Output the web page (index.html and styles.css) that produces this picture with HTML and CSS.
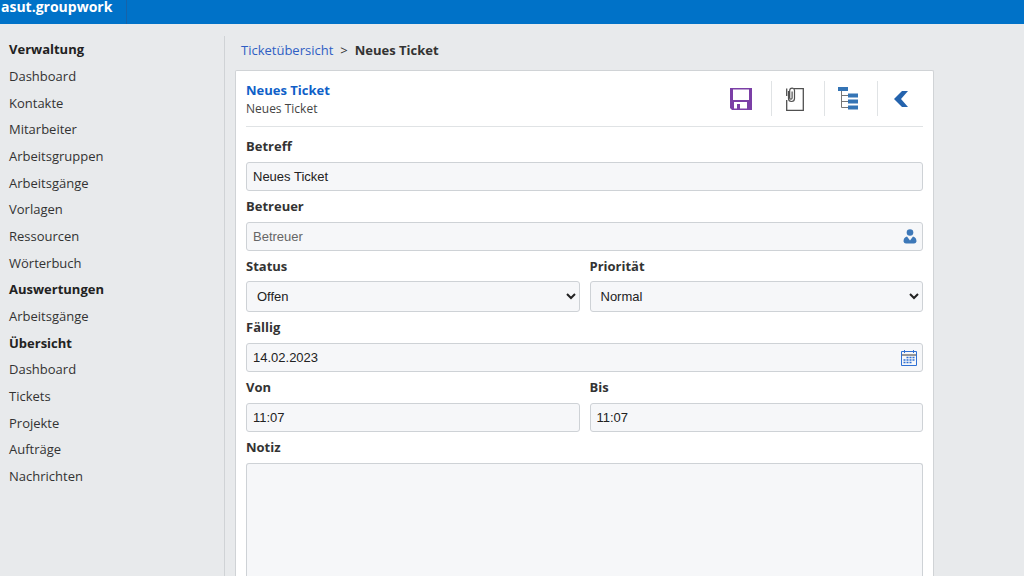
FILE: index.html
```html
<!DOCTYPE html>
<html lang="de">
<head>
<meta charset="utf-8">
<meta name="viewport" content="width=device-width, initial-scale=1">
<title>asut.groupwork – Neues Ticket</title>
<link rel="stylesheet" href="styles.css">
</head>
<body>
<header class="topbar"><a class="brand" href="#">asut.groupwork</a></header>
<div class="layout">
  <nav class="sidebar" aria-label="Hauptnavigation">
    <h2>Verwaltung</h2>
    <a href="#">Dashboard</a>
    <a href="#">Kontakte</a>
    <a href="#">Mitarbeiter</a>
    <a href="#">Arbeitsgruppen</a>
    <a href="#">Arbeitsgänge</a>
    <a href="#">Vorlagen</a>
    <a href="#">Ressourcen</a>
    <a href="#">Wörterbuch</a>
    <h2>Auswertungen</h2>
    <a href="#">Arbeitsgänge</a>
    <h2>Übersicht</h2>
    <a href="#">Dashboard</a>
    <a href="#">Tickets</a>
    <a href="#">Projekte</a>
    <a href="#">Aufträge</a>
    <a href="#">Nachrichten</a>
  </nav>
  <main class="content">
    <nav class="breadcrumb" aria-label="Pfad">
      <a href="#">Ticketübersicht</a><span>&gt;</span><strong>Neues Ticket</strong>
    </nav>
    <form class="card">
      <div class="card-head">
        <div class="titles">
          <h1>Neues Ticket</h1>
          <p>Neues Ticket</p>
        </div>
        <div class="tools">
          <button type="button" aria-label="Speichern">
            <svg width="22" height="22" viewBox="0 0 22 22"><path fill="#7b3fa6" fill-rule="evenodd" d="M0 0H22V22H2L0 20ZM3 1.500V12H19V1.500ZM4 14V20.500H7V16H10V20.500H17V14Z"/></svg>
          </button>
          <button type="button" aria-label="Anhang">
            <svg width="20" height="24" viewBox="0 0 20 24" fill="none" stroke="#505050"><path stroke-width="1.300" d="M9 1.700H18.300V23.300H1.700V13M1.700 1.500V9"/><path stroke-width="1.200" d="M3.500 4V11.500a3 3 0 0 0 6 0V3.500a2.400 2.400 0 0 0-4.800 0V11a1.200 1.200 0 0 0 2.400 0V4.500"/></svg>
          </button>
          <button type="button" aria-label="Struktur">
            <svg width="22" height="23" viewBox="0 0 22 23"><path fill="none" stroke="#777" d="M4.500 4V20.500H12M4.500 8.500H12M4.500 14.500H12"/><path fill="#3474b5" d="M1 0H11V4H1ZM11 6.500H21V10.500H11ZM11 12.500H21V16.500H11ZM11 18.500H21V22.500H11Z"/></svg>
          </button>
          <button type="button" aria-label="Zurück">
            <svg width="16" height="18" viewBox="0 0 16 18"><path fill="#2463ad" d="M9 1H15L8 9L15 17H9L1 9Z"/></svg>
          </button>
        </div>
      </div>
      <div class="field">
        <label for="subject">Betreff</label>
        <input id="subject" type="text" value="Neues Ticket">
      </div>
      <div class="field">
        <label for="owner">Betreuer</label>
        <div class="control">
          <input id="owner" type="text" placeholder="Betreuer">
          <button class="picker" type="button" aria-label="Betreuer wählen">
            <svg width="14" height="15" viewBox="0 0 14 15" fill="#3d78b8"><circle cx="7" cy="3.500" r="3.300"/><path d="M4 7.500L7 11.500L10 7.500C12.500 8.300 13.500 10 13.500 12.500Q13 14.500 11 14.500H3Q1 14.500.5 12.500C.5 10 1.500 8.300 4 7.500Z"/></svg>
          </button>
        </div>
      </div>
      <div class="pair choices">
        <div class="field">
          <label for="status">Status</label>
          <select id="status"><option>Offen</option></select>
        </div>
        <div class="field">
          <label for="priority">Priorität</label>
          <select id="priority"><option>Normal</option></select>
        </div>
      </div>
      <div class="field">
        <label for="due">Fällig</label>
        <div class="control">
          <input id="due" type="text" value="14.02.2023">
          <button class="picker" type="button" aria-label="Datum wählen">
            <svg width="18" height="16" viewBox="0 0 18 16"><path fill="none" stroke="#2f70d4" d="M1.500 1.500H16.500V15.500H1.500ZM4.500 0V3M13.500 0V3"/><path stroke="#777" stroke-width="1.500" d="M2 5H16"/><path stroke="#2f70d4" stroke-width="1.500" stroke-dasharray="2 1" d="M6.500 7.500H15M3.500 10H15M3.500 12.500H12"/></svg>
          </button>
        </div>
      </div>
      <div class="pair">
        <div class="field">
          <label for="from">Von</label>
          <input id="from" type="text" value="11:07">
        </div>
        <div class="field">
          <label for="to">Bis</label>
          <input id="to" type="text" value="11:07">
        </div>
      </div>
      <div class="field">
        <label for="note">Notiz</label>
        <textarea id="note"></textarea>
      </div>
    </form>
  </main>
</div>
</body>
</html>
```
FILE: styles.css
```css
* { box-sizing: border-box; }
body {
  display: flex;
  flex-direction: column;
  margin: 0;
  min-height: 100vh;
  background: #e8eaec;
  color: #333;
  font: 13px/18px "Open Sans", "Noto Sans", sans-serif;
}
a { color: inherit; text-decoration: none; }
h1, h2, p { margin: 0; font-size: inherit; }
button { padding: 0; border: 0; background: none; cursor: pointer; }
svg { display: block; }

.topbar {
  display: flex;
  height: 24px;
  background: #0072c8;
  color: #fff;
}
.brand {
  width: 127px;
  padding-left: 1px;
  border-right: 1px solid #1763a8;
  font-size: 14px;
  line-height: 14px;
  font-weight: 700;
}

.layout { display: flex; flex: 1; padding-top: 12px; }
.sidebar {
  display: flex;
  flex-direction: column;
  flex: none;
  width: 225px;
  padding-left: 9px;
  border-right: 1px solid #d0d3d6;
}
.sidebar > * { line-height: 27px; }
.sidebar > :nth-child(3n) { line-height: 26px; }
.sidebar h2 { color: #222; }

.content {
  display: flex;
  flex-direction: column;
  flex: 1;
  min-width: 0;
  padding: 0 90px 0 10px;
}
.breadcrumb {
  display: flex;
  gap: 7px;
  padding: 5px 6px 11px;
}
.breadcrumb a { color: #2f5fc4; }

.card {
  display: flex;
  flex-direction: column;
  flex: 1;
  padding: 10px 10px 0;
  border: 1px solid #d0d3d6;
  border-bottom: 0;
  border-radius: 2px 2px 0 0;
  background: #fff;
}
.card-head {
  display: flex;
  justify-content: space-between;
  height: 46px;
  margin-bottom: 4px;
  border-bottom: 1px solid #e0e3e5;
}
.titles h1 { color: #0f5fc8; line-height: 19px; }
.titles p { font-size: 12px; color: #444; }
.tools { display: flex; height: 35px; }
.tools button {
  display: grid;
  place-items: center;
  width: 53px;
  padding-right: 7px;
}
.tools button + button { border-left: 1px solid #e0e3e5; }
.tools button:last-child { width: 46px; padding: 0; }

.field { display: flex; flex-direction: column; }
.field label { font-weight: 700; line-height: 31px; }
.field:last-child:has(textarea) { flex: 1; }
.pair { display: grid; grid-template-columns: 1fr 1fr; column-gap: 10px; }
input, select, textarea {
  display: block;
  width: 100%;
  height: 29px;
  margin: 0;
  padding: 0 6px;
  border: 1px solid #ced2d6;
  border-radius: 3px;
  background: #f6f7f9;
  color: #222;
  font: 13px "Liberation Sans", Arial, sans-serif;
}
input::placeholder { color: #666; }
select { height: 31px; }
.choices label { line-height: 30px; }
textarea {
  flex: 1;
  min-height: 112px;
  border-bottom: 0;
  border-radius: 3px 3px 0 0;
  resize: none;
}
.control { position: relative; }
.picker {
  position: absolute;
  top: 0;
  right: 5px;
  display: grid;
  place-items: center;
  min-width: 16px;
  height: 29px;
}
```
